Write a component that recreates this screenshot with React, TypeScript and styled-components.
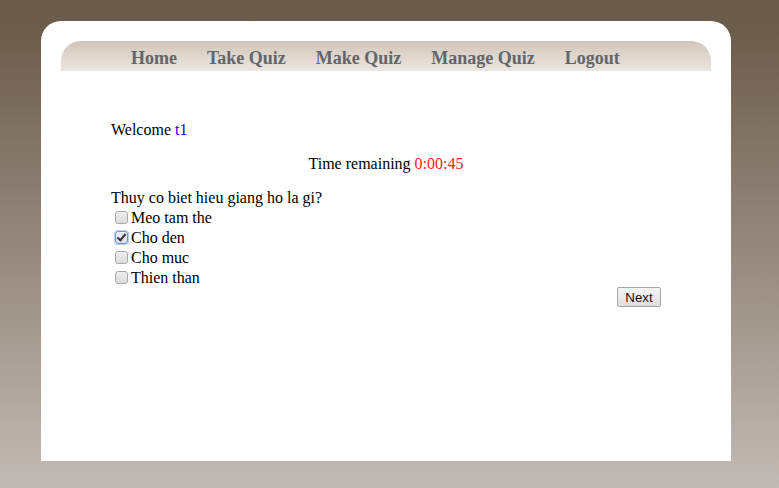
import { useState } from "react";
import styled, { createGlobalStyle } from "styled-components";

const GlobalStyle = createGlobalStyle`
  html, body {
    margin: 0;
    padding: 0;
  }
  body {
    min-height: 488px;
    background: linear-gradient(to bottom, #6b5b4b 0%, #6c5c4c 6%, #c2bab4 100%);
    font-family: "Liberation Serif", "Times New Roman", serif;
    font-size: 16px;
    color: #000;
  }
`;

const Page = styled.div`
  min-height: 488px;
  padding-top: 21px;
  box-sizing: border-box;
`;

const Container = styled.div`
  width: 690px;
  height: 440px;
  margin: 0 0 0 41px;
  background: #fff;
  border-radius: 20px 20px 0 0;
  padding: 20px;
  box-sizing: border-box;
`;

const Nav = styled.ul`
  list-style: none;
  margin: 0;
  padding: 0 0 0 55px;
  height: 30px;
  display: flex;
  border-radius: 20px 20px 0 0;
  background: linear-gradient(to bottom, #d1c5b9 0%, #ece6e0 100%);
`;

const NavItem = styled.li`
  padding: 0 15px;
  line-height: 34px;
  height: 30px;
  font-size: 18px;
  font-weight: bold;
  color: #62666a;
  cursor: pointer;
`;

const Content = styled.div`
  padding: 50px 50px 0 50px;
`;

const Line = styled.p<{ center?: boolean }>`
  margin: 0 0 16px;
  text-align: ${(p) => (p.center ? "center" : "left")};
`;

const User = styled.span`
  color: #0000ee;
`;

const Timer = styled.span`
  color: #ff2020;
`;

const Question = styled.div`
  margin: 0;
`;

const Option = styled.label`
  display: flex;
  align-items: center;
  height: 20px;
  padding-top: 2px;
  box-sizing: border-box;
`;

const Check = styled.input`
  appearance: none;
  width: 13px;
  height: 13px;
  margin: 0 3px 0 4px;
  box-sizing: border-box;
  border: 1px solid #a9a9a9;
  border-radius: 3px;
  background: linear-gradient(to bottom, #ededed, #dcdcdc);
  position: relative;
  top: -1px;

  &:checked {
    border-color: #6d97d9;
    box-shadow: 0 0 0 1px #b9cdef;
  }

  &:checked::after {
    content: "";
    position: absolute;
    left: 3px;
    top: 0px;
    width: 3px;
    height: 7px;
    border: solid #333;
    border-width: 0 2px 2px 0;
    transform: rotate(40deg);
  }
`;

const ButtonRow = styled.div`
  display: flex;
  justify-content: flex-end;
`;

const NextButton = styled.button`
  height: 20px;
  width: 44px;
  padding: 0;
  font-family: "Liberation Sans", Arial, sans-serif;
  font-size: 13.33px;
  color: #111;
  border: 1px solid #a6a6a6;
  border-radius: 2px;
  background: linear-gradient(to bottom, #f6f6f6, #dedede);
`;

const options = ["Meo tam the", "Cho den", "Cho muc", "Thien than"];

export default function App() {
  const [picked, setPicked] = useState<boolean[]>([false, true, false, false]);

  return (
    <Page>
      <GlobalStyle />
      <Container>
        <Nav>
          <NavItem>Home</NavItem>
          <NavItem>Take Quiz</NavItem>
          <NavItem>Make Quiz</NavItem>
          <NavItem>Manage Quiz</NavItem>
          <NavItem>Logout</NavItem>
        </Nav>
        <Content>
          <Line>
            Welcome <User>t1</User>
          </Line>
          <Line center>
            Time remaining <Timer>0:00:45</Timer>
          </Line>
          <Question>Thuy co biet hieu giang ho la gi?</Question>
          {options.map((o, i) => (
            <Option key={o}>
              <Check
                type="checkbox"
                checked={picked[i]}
                onChange={() =>
                  setPicked(picked.map((v, j) => (j === i ? !v : v)))
                }
              />
              {o}
            </Option>
          ))}
          <ButtonRow>
            <NextButton>Next</NextButton>
          </ButtonRow>
        </Content>
      </Container>
    </Page>
  );
}
